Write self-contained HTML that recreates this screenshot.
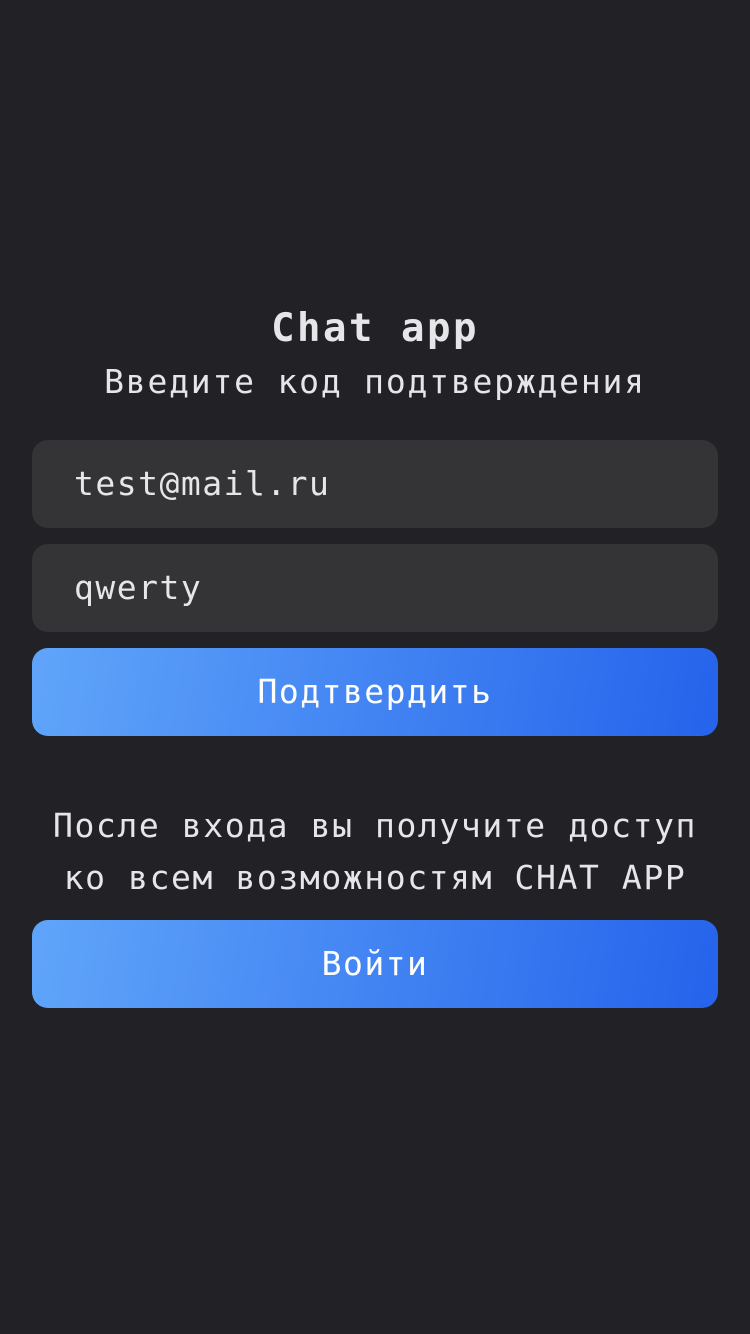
<!DOCTYPE html>
<html><head><meta charset="utf-8"><style>
html,body{margin:0;padding:0;width:750px;height:1334px;background:#222126;overflow:hidden}
body{font-family:"DejaVu Sans Mono","Liberation Mono",monospace;color:#e6e6e8;position:relative}
.t{position:absolute;left:0;width:750px;text-align:center;white-space:nowrap;line-height:1}
.box{position:absolute;left:32px;width:686px;height:88px;border-radius:16px;box-sizing:border-box}
.in{background:#343336;font-size:33px;letter-spacing:1.5px;line-height:88px;padding-left:42px;color:#e6e6e8}
.btn{background:linear-gradient(100deg,#60a5fa,#2563eb);color:#fff;font-size:33px;letter-spacing:1.5px;line-height:88px;text-align:center}
</style></head><body>
<div class="t" style="top:309px;font-size:39px;font-weight:bold;letter-spacing:2.5px">Chat app</div>
<div class="t" style="top:365px;font-size:33px;letter-spacing:1.8px">Введите код подтверждения</div>
<div class="box in" style="top:440px">test@mail.ru</div>
<div class="box in" style="top:544px">qwerty</div>
<div class="box btn" style="top:648px">Подтвердить</div>
<div class="t" style="top:809px;font-size:33px;letter-spacing:1.6px">После входа вы получите доступ</div>
<div class="t" style="top:861px;font-size:33px;letter-spacing:1.6px">ко всем возможностям CHAT APP</div>
<div class="box btn" style="top:920px">Войти</div>
</body></html>
